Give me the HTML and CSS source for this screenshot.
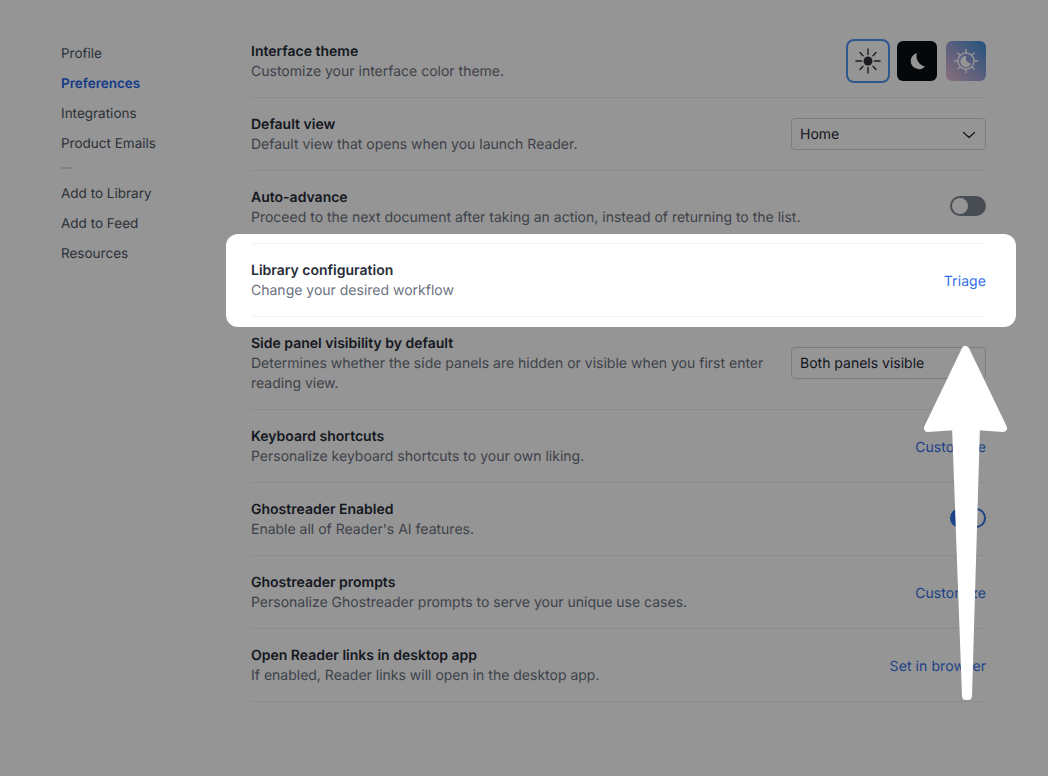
FILE: index.html
```html
<!DOCTYPE html>
<html lang="en">
<head>
<meta charset="utf-8">
<title>Preferences</title>
<link rel="stylesheet" href="styles.css">
</head>
<body>
<div class="page">
  <nav class="sidebar">
    <a class="nav-item">Profile</a>
    <a class="nav-item active">Preferences</a>
    <a class="nav-item">Integrations</a>
    <a class="nav-item">Product Emails</a>
    <div class="nav-sep"><span></span></div>
    <a class="nav-item">Add to Library</a>
    <a class="nav-item">Add to Feed</a>
    <a class="nav-item">Resources</a>
  </nav>
  <main class="settings">
    <section class="row">
      <div class="info"><h3>Interface theme</h3><p>Customize your interface color theme.</p></div>
      <div class="themes">
        <button class="theme light selected">
          <svg width="26" height="26" viewBox="0 0 26 26" fill="none" stroke="#2b2f36" stroke-width="1.400" stroke-linecap="round"><circle cx="13" cy="13" r="4.500" fill="#2b2f36" stroke="none"/><path d="M13 1v5.500M13 19.500V25M1 13h5.500M19.500 13H25M5 4.500l3 3.200M18 18.300l3 3.200M5 21.500l3-3.200M18 7.700l3-3.200"/></svg>
        </button>
        <button class="theme dark">
          <svg width="24" height="24" viewBox="0 0 24 24"><path d="M12 4A8.200 8.200 0 1 0 20 17.500A10.500 10.500 0 0 1 12 4Z" fill="#fff"/></svg>
        </button>
        <button class="theme system">
          <svg width="26" height="26" viewBox="0 0 26 26" fill="none" stroke="#fff" stroke-width="1.400" stroke-linecap="round"><circle cx="13" cy="13" r="8"/><path d="M13 1.500v3M13 21.500v3M1.500 13h3M21.500 13h3M4.900 4.900l2.100 2.100M19 19l2.100 2.100M4.900 21.100l2.100-2.100M19 7l2.100-2.100"/><path d="M13.500 8A5.500 5.500 0 1 0 18 15.500A5 5 0 0 1 13.500 8Z" fill="#fff" stroke="none"/></svg>
        </button>
      </div>
    </section>
    <section class="row">
      <div class="info"><h3>Default view</h3><p>Default view that opens when you launch Reader.</p></div>
      <div class="select"><span>Home</span>
        <svg class="chev" width="14" height="8" viewBox="0 0 14 8" fill="none" stroke="#1f2937" stroke-width="1.200" stroke-linecap="round" stroke-linejoin="round"><path d="M1.500 1.500L7 6.500l5.500-5"/></svg>
      </div>
    </section>
    <section class="row">
      <div class="info"><h3>Auto-advance</h3><p>Proceed to the next document after taking an action, instead of returning to the list.</p></div>
      <div class="toggle off"><span class="knob"></span></div>
    </section>
    <section class="row highlight">
      <div class="info"><h3>Library configuration</h3><p>Change your desired workflow</p></div>
      <a class="link">Triage</a>
    </section>
    <section class="row">
      <div class="info narrow"><h3>Side panel visibility by default</h3><p>Determines whether the side panels are hidden or visible when you first enter reading view.</p></div>
      <div class="select"><span>Both panels visible</span>
        <svg class="chev" width="14" height="8" viewBox="0 0 14 8" fill="none" stroke="#1f2937" stroke-width="1.200" stroke-linecap="round" stroke-linejoin="round"><path d="M1.500 1.500L7 6.500l5.500-5"/></svg>
      </div>
    </section>
    <section class="row">
      <div class="info"><h3>Keyboard shortcuts</h3><p>Personalize keyboard shortcuts to your own liking.</p></div>
      <a class="link">Customize</a>
    </section>
    <section class="row">
      <div class="info"><h3>Ghostreader Enabled</h3><p>Enable all of Reader's AI features.</p></div>
      <div class="toggle on"><span class="knob"></span></div>
    </section>
    <section class="row">
      <div class="info"><h3>Ghostreader prompts</h3><p>Personalize Ghostreader prompts to serve your unique use cases.</p></div>
      <a class="link">Customize</a>
    </section>
    <section class="row">
      <div class="info"><h3>Open Reader links in desktop app</h3><p>If enabled, Reader links will open in the desktop app.</p></div>
      <a class="link">Set in browser</a>
    </section>
  </main>
</div>
<div class="scrim"></div>
<svg class="arrow" width="1048" height="776" viewBox="0 0 1048 776">
  <path d="M965.500 350L1003 428L976 426L968 696L966 696L956 426L928 428Z" fill="#fff" stroke="#fff" stroke-width="8" stroke-linejoin="round"/>
</svg>
</body>
</html>
```
FILE: styles.css
```css
* { box-sizing: border-box; }
html, body { margin: 0; height: 100%; overflow: hidden; }
body { background: #fff; font-family: Inter, "Liberation Sans", sans-serif; font-size: 14px; line-height: 20px; color: #1f2937; text-rendering: geometricPrecision; }
.page { display: flex; padding-left: 61px; }
.sidebar { width: 190px; flex: none; padding-top: 39px; display: flex; flex-direction: column; }
.nav-item { height: 30px; line-height: 30px; font-size: 13.500px; color: #4b5563; }
.nav-item.active { color: #2563eb; font-weight: 600; }
.nav-sep { height: 20px; padding-bottom: 2px; display: flex; align-items: center; }
.nav-sep span { width: 11px; height: 2px; background: #e0e2e6; }
.settings { width: 735px; flex: none; padding-top: 25px; }
.row { display: flex; justify-content: space-between; align-items: center; padding: 16px 0; border-bottom: 1px solid #eeeff1; }
.info { max-width: 555px; padding-top: 1px; margin-bottom: -1px; }
.info.narrow { max-width: 525px; }
.info h3 { margin: 0; font-size: 14px; line-height: 20px; font-weight: 600; color: #262c38; }
.info p { margin: 0; font-size: 14px; line-height: 20px; color: #6b7280; }
.themes { display: flex; gap: 9px; }
.theme { width: 40px; height: 40px; padding: 0; border: 0; border-radius: 6px; display: flex; align-items: center; justify-content: center; }
.theme.light { background: #fff; }
.theme.selected { box-shadow: 0 0 0 2px #4f93f5; }
.theme.dark { background: #0a0e14; }
.theme.system { background: linear-gradient(45deg, #e8bdd0 0%, #9aa3d8 50%, #3d8fd6 100%); }
.select { width: 195px; height: 32px; padding: 2px 9px 0 8px; border: 1px solid #d1d5db; border-radius: 4px; background: #fff; display: flex; align-items: center; justify-content: space-between; color: #1f2937; flex: none; }
.toggle { width: 36px; height: 20px; margin-bottom: 2px; border-radius: 10px; padding: 2px; display: flex; flex: none; }
.toggle .knob { width: 16px; height: 16px; border-radius: 50%; background: #fff; }
.toggle.off { background: #7c838e; justify-content: flex-start; }
.toggle.on { background: #2f6fe8; justify-content: flex-end; }
.link { color: #3370e8; margin-top: 4px; letter-spacing: .08px; }
.highlight { position: relative; z-index: 2; margin-top: -1px; border-top: 1px solid transparent; border-bottom-color: transparent; }
.highlight::before { content: ""; position: absolute; top: -10px; bottom: -11px; left: -25px; right: -30px; background: #fff; border-radius: 12px; z-index: -1; }
.highlight::after { content: ""; position: absolute; top: -1px; bottom: -1px; left: 0; right: 0; border-top: 1px solid #f1f2f4; border-bottom: 1px solid #f1f2f4; }
.scrim { position: fixed; inset: 0; background: rgba(0, 0, 0, .416); z-index: 1; }
.arrow { position: fixed; left: 0; top: 0; z-index: 3; }
```
